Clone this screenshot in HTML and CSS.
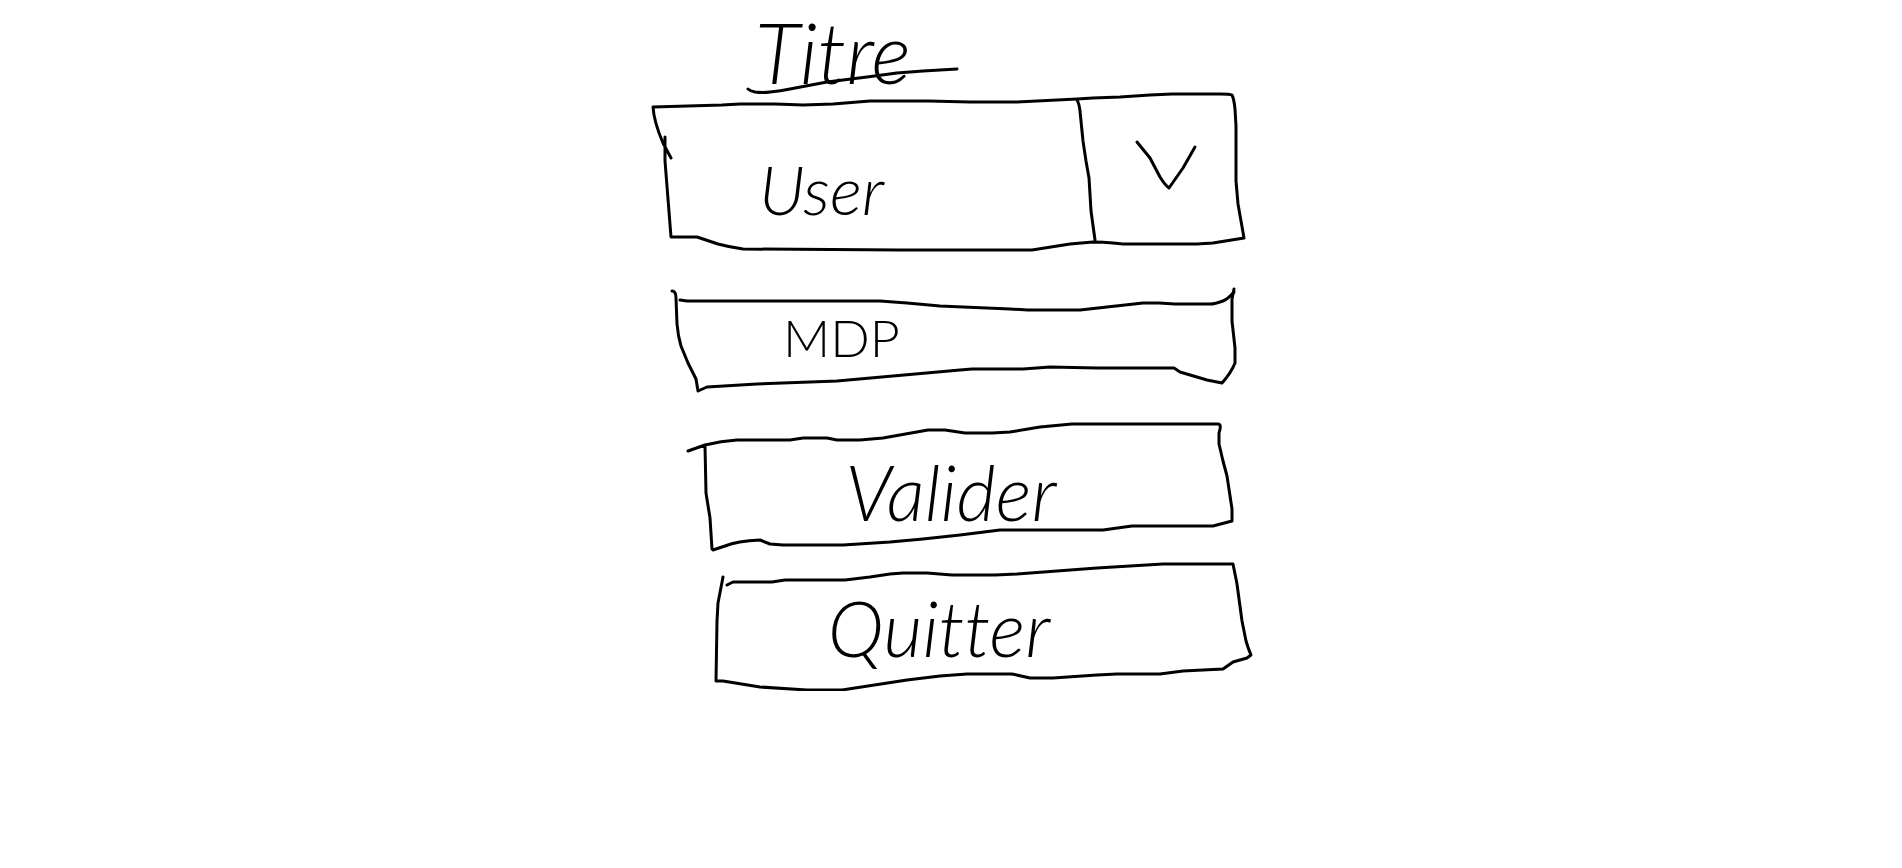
FILE: index.html
```html
<!DOCTYPE html>
<html lang="fr">
<head>
<meta charset="utf-8">
<meta name="viewport" content="width=device-width, initial-scale=1">
<title>Titre</title>
<link rel="stylesheet" href="styles.css">
</head>
<body>
<main class="login">
  <header class="heading">
    <h1 class="title">Titre</h1>
    <svg class="ink" viewBox="0 0 600 93" preserveAspectRatio="none" aria-hidden="true">
      <path d="M97 89Q99 91 104 92Q112 93 119 92Q130 91 139 89L176 82L216 77L246 73L272 71L306 69"/>
    </svg>
  </header>
  <form class="form">
    <div class="field field-user">
      <select class="control select" aria-label="User">
        <option>User</option>
      </select>
      <svg class="ink" viewBox="0 0 600 158" preserveAspectRatio="none" aria-hidden="true">
        <path d="M20 65L12 50Q3 29 2 14L71 12L89 11L124 11L152 12L182 11L219 8L277 8L319 9L366 9L426 6L442 5L469 4L499 2L521 1L569 1Q579 1 581 2Q583 6 584 16L585 33L585 88L587 111L593 145L562 150L546 151L472 151L462 150Q452 149 442 149L419 151L381 157L249 157L92 156Q78 154 67 151L46 144L20 144L14 68L14 44"/>
        <path d="M426 7Q428 10 429 18L432 48L435 68L438 85L440 118L444 147"/>
        <path d="M486 49L499 65L509 84Q514 92 518 95L532 75L544 54"/>
      </svg>
    </div>
    <div class="field field-password">
      <input class="control input" type="password" placeholder="MDP" aria-label="MDP">
      <svg class="ink" viewBox="0 0 600 100" preserveAspectRatio="none" aria-hidden="true">
        <path d="M21 0Q25 0 25 7L26 33Q27 45 30 55L37 72L45 88L47 100L56 96L106 93L159 91L186 90L309 79L321 78L372 78L399 76L446 77L523 77L529 81L556 89L571 92Q580 82 584 72L584 57L581 30L581 8L583 -2"/>
        <path d="M583 1Q577 8 572 10Q564 13 559 13L524 13L508 12L492 12L429 19L377 19L359 18L289 15L256 12L229 10L36 10L29 9"/>
      </svg>
    </div>
    <div class="actions">
      <button class="control button button-submit" type="submit">Valider
        <svg class="ink" viewBox="0 0 600 128" preserveAspectRatio="none" aria-hidden="true">
          <path d="M37 28L54 22Q70 18 86 17L139 17L152 15L176 15L186 17L209 17L232 15L277 7L294 7L314 10L341 10L359 9L389 4L421 1L567 1Q571 1 568 10L568 21L572 38L576 53L581 86L581 98L562 103L481 103L452 107L349 107L309 112L272 116L239 119L192 122L132 122L119 121L109 117Q86 118 74 123L62 127L61 126L59 95L55 70L54 23"/>
        </svg>
      </button>
      <button class="control button button-quit" type="button">Quitter
        <svg class="ink" viewBox="0 0 600 128" preserveAspectRatio="none" aria-hidden="true">
          <path d="M72 14L67 40L66 58L65 118L72 118L109 124L156 127L191 127L256 117L289 113L316 111L361 111L379 115L402 115L446 112L466 111L509 111L532 108L572 106L582 99L596 95L600 92Q597 85 595 78L591 58L586 21L582 1L512 1L479 3L446 5L366 11L344 12L301 12L276 10L252 10L239 11L219 14L194 17L134 17L121 19L82 19L76 22"/>
        </svg>
      </button>
    </div>
  </form>
</main>
</body>
</html>
```
FILE: styles.css
```css
* {
  box-sizing: border-box;
}

body {
  margin: 0;
  background: #fff;
  color: #000;
  font-family: Lato, "Open Sans", sans-serif;
  font-weight: 300;
}

.login {
  width: 100%;
  max-width: 600px;
  margin: 0 auto;
}

.heading {
  display: flow-root;
  position: relative;
  padding-left: 104px;
}

.title {
  margin: 0 0 -11px;
  font-size: 84px;
  font-style: italic;
  font-weight: 300;
  line-height: 104px;
}

.form {
  display: flex;
  flex-direction: column;
}

.field,
.button {
  position: relative;
}

.control {
  display: block;
  width: 100%;
  margin: 0;
  border: 0;
  background: transparent;
  color: inherit;
  font: inherit;
  font-style: italic;
  appearance: none;
}

.select {
  height: 158px;
  padding: 32px 160px 0 108px;
  font-size: 68px;
}

.field-password {
  margin: 40px 0 32px;
}

.input {
  height: 100px;
  padding: 0 32px 8px 132px;
  font-size: 52px;
  font-style: normal;
}

.input::placeholder {
  color: inherit;
  opacity: 1;
}

.actions {
  display: flex;
  flex-direction: column;
  gap: 12px;
}

.button {
  height: 128px;
  padding: 0;
  font-size: 76px;
  font-variant-ligatures: none;
  text-align: center;
  cursor: pointer;
}

.button-submit {
  padding-top: 8px;
}

.button-quit {
  padding-right: 24px;
}

.ink {
  position: absolute;
  inset: 0;
  width: 100%;
  height: 100%;
  overflow: visible;
  pointer-events: none;
}

.ink path {
  fill: none;
  stroke: #000;
  stroke-width: 3px;
  stroke-linecap: round;
  stroke-linejoin: round;
  vector-effect: non-scaling-stroke;
}
```
